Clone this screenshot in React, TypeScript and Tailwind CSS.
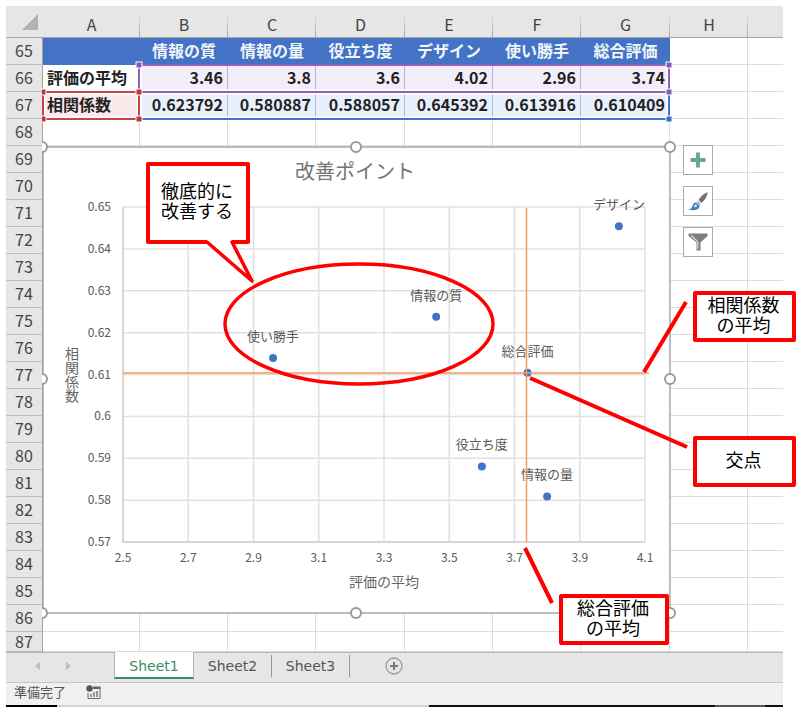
import clsx from "clsx"

const columns = ["A", "B", "C", "D", "E", "F", "G", "H", ""]
const items = ["情報の質", "情報の量", "役立ち度", "デザイン", "使い勝手", "総合評価"]
const scores = ["3.46", "3.8", "3.6", "4.02", "2.96", "3.74"]
const correlations = ["0.623792", "0.580887", "0.588057", "0.645392", "0.613916", "0.610409"]
const emptyRows = Array.from({ length: 20 }, (_, i) => 68 + i)

const points = [
    { name: "情報の質", x: 3.46, y: 0.623792 },
    { name: "情報の量", x: 3.8, y: 0.580887 },
    { name: "役立ち度", x: 3.6, y: 0.588057 },
    { name: "デザイン", x: 4.02, y: 0.645392 },
    { name: "使い勝手", x: 2.96, y: 0.613916 },
    { name: "総合評価", x: 3.74, y: 0.610409 },
]

const xTicks = [2.5, 2.7, 2.9, 3.1, 3.3, 3.5, 3.7, 3.9, 4.1]
const yTicks = [0.65, 0.64, 0.63, 0.62, 0.61, 0.6, 0.59, 0.58, 0.57]

const sx = (v: number) => 81 + ((v - 2.5) / 1.6) * 522
const sy = (v: number) => 67 + ((0.65 - v) / 0.08) * 335

const RowHeader = ({ n }: { n: number }) => (
    <th scope="row" className="border-r border-b border-r-[#a0a0a0] border-b-[#bdbdbd] bg-[#e6e6e6] p-0 pb-0.5 text-center leading-4 font-normal text-[#444]">
        {n}
    </th>
)

const cell = "border-r border-b border-[#dcdcdc] p-0"
const headCell = "bg-[#4472c4] p-0 pb-1 text-center font-bold text-[#f1f5fc]"
const labelCell = "p-0 pb-1 pl-1 text-left font-bold whitespace-nowrap text-[#222]"
const valueCell = "border-r border-[#a9b9e6] p-0 pr-1 pb-1 text-right font-bold text-[#222]"

const Cells = () => (
    <table className="w-full table-fixed border-separate border-spacing-0 text-base leading-5">
        <colgroup>
            <col className="w-[37px]" />
            <col className="w-[97px]" />
            <col className="w-[88px]" />
            <col className="w-[88px]" />
            <col className="w-[89px]" />
            <col className="w-[88px]" />
            <col className="w-[88px]" />
            <col className="w-[89px]" />
            <col className="w-[78px]" />
            <col />
        </colgroup>
        <thead>
            <tr className="h-8 bg-[#e6e6e6] text-[#444]">
                <td className="border-b border-[#a6a6a6] p-0">
                    <svg className="ml-4 h-4 w-4" viewBox="0 0 16 16" aria-hidden="true">
                        <path d="M16 0V16H0Z" fill="#b2b2b2" />
                    </svg>
                </td>
                {columns.map((c, i) => (
                    <th
                        key={i}
                        className={clsx(
                            "border-b border-[#a6a6a6] p-0 pt-1 font-normal",
                            c && "bg-[linear-gradient(to_bottom,#e6e6e6_20%,#a6a6a6)] bg-[length:1px_100%] bg-right bg-no-repeat",
                        )}
                    >
                        {c}
                    </th>
                ))}
            </tr>
        </thead>
        <tbody>
            <tr className="h-[27px]">
                <RowHeader n={65} />
                <td className="bg-[#4472c4] p-0"></td>
                {items.map((t) => (
                    <th key={t} scope="col" className={headCell}>{t}</th>
                ))}
                <td className={cell}></td>
                <td className="border-b border-[#dcdcdc] p-0"></td>
            </tr>
            <tr className="h-[27px]">
                <RowHeader n={66} />
                <th className={labelCell}>評価の平均</th>
                {scores.map((t, i) => (
                    <td key={i} className={clsx(valueCell, "bg-[#f2edf8]")}>{t}</td>
                ))}
                <td className={cell}></td>
                <td className="border-b border-[#dcdcdc] p-0"></td>
            </tr>
            <tr className="h-[27px]">
                <RowHeader n={67} />
                <th className={clsx(labelCell, "bg-[#fae9ea]")}>相関係数</th>
                {correlations.map((t, i) => (
                    <td key={i} className={clsx(valueCell, "bg-[#e9f0fb]")}>{t}</td>
                ))}
                <td className={cell}></td>
                <td className="border-b border-[#dcdcdc] p-0"></td>
            </tr>
            {emptyRows.map((n) => (
                <tr key={n} className={n === 87 ? "h-5" : "h-[27px]"}>
                    <RowHeader n={n} />
                    {columns.map((c, i) => (
                        <td key={i} className={c ? cell : "border-b border-[#dcdcdc] p-0"}></td>
                    ))}
                </tr>
            ))}
        </tbody>
    </table>
)

// coloured outlines of the ranges the chart reads from
const RangeOutlines = () => {
    const handles: [number, number, string][] = [
        [97, 7, "#8457b8"],
        [627, 7, "#8457b8"],
        [627, 34, "#8457b8"],
        [627, 61, "#2f6fc9"],
        [1, 34, "#c0343f"],
        [97, 34, "#c0343f"],
        [1, 61, "#c0343f"],
        [97, 61, "#c0343f"],
    ]
    return (
        <svg className="pointer-events-none absolute top-[52px] left-[36px] h-[66px] w-[632px]" viewBox="0 0 632 66" fill="none" aria-hidden="true">
            <path d="M97 34V7M627 7V34H97M1 34H97V61H1ZM97 61H627V34" stroke="#fff" strokeWidth="5" />
            <path d="M97 61H627V34" stroke="#3a74cb" strokeWidth="2" />
            <path d="M97 7H627V34H97Z" stroke="#8c62bd" strokeWidth="2" />
            <path d="M1 34H97V61H1Z" stroke="#c4434d" strokeWidth="2" />
            {handles.map(([x, y, c]) => (
                <rect key={`${x}-${y}`} x={x - 3} y={y - 3} width="6" height="6" fill={c} stroke="#fff" />
            ))}
        </svg>
    )
}

const Chart = () => (
    <svg
        className="absolute top-[134px] left-[36px] h-[480px] w-[636px]"
        viewBox="0 0 636 480"
        fontSize="12"
        fill="#595959"
        textAnchor="middle"
        role="img"
        aria-label="改善ポイント"
    >
        <rect x="1" y="7" width="627" height="466" fill="#fff" stroke="#a6a6a6" strokeWidth="1.5" />
        <text x="313" y="39" fontSize="20" fill="#757575">改善ポイント</text>
        <g stroke="#e0e0e0" strokeWidth="1.5">
            {xTicks.map((t) => <line key={t} x1={sx(t)} x2={sx(t)} y1="67" y2="402" />)}
            {yTicks.map((t) => <line key={t} x1="81" x2="603" y1={sy(t)} y2={sy(t)} />)}
        </g>
        <path d="M81 67V402H603" fill="none" stroke="#cfcfcf" strokeWidth="1.5" />
        {xTicks.map((t) => <text key={t} x={sx(t)} y="422">{t}</text>)}
        {yTicks.map((t) => <text key={t} x="69" y={sy(t) + 4} textAnchor="end">{t}</text>)}
        <text x="342" y="447" fontSize="14" fill="#666">評価の平均</text>
        <text x="30" y="235" fontSize="14" fill="#666" className="[writing-mode:vertical-rl]">相関係数</text>
        {points.map((p) => (
            <g key={p.name}>
                <circle cx={sx(p.x)} cy={sy(p.y)} r="4" fill="#4472c4" />
                <text x={sx(p.x)} y={sy(p.y) - 17} fontSize="13">{p.name}</text>
            </g>
        ))}
        <path d="M81 233H607M484.500 68V402" fill="none" stroke="#f49b5c" strokeWidth="1.5" />
        <g fill="#fff" stroke="#9b9b9b" strokeWidth="2">
            {[7, 239, 473].map((y) => <circle key={y} cx="0" cy={y} r="5" />)}
            {[7, 239, 473].map((y) => <circle key={y} cx="628" cy={y} r="5" />)}
            <circle cx="314" cy="7" r="5" />
            <circle cx="314" cy="473" r="5" />
        </g>
    </svg>
)

const toolButton = "flex h-[30px] w-[30px] items-center justify-center border border-[#ababab] bg-white"

const ChartTools = () => (
    <div className="absolute top-[139px] left-[677px] flex flex-col gap-[11px]">
        <button className={toolButton} aria-label="グラフ要素">
            <svg className="h-4 w-4" viewBox="0 0 16 16" aria-hidden="true">
                <path d="M6 0.5H10V6H15.5V10H10V15.5H6V10H0.5V6H6Z" fill="#68a890" />
            </svg>
        </button>
        <button className={toolButton} aria-label="グラフ スタイル">
            <svg className="h-5 w-5" viewBox="0 0 20 20" aria-hidden="true">
                <path d="M19.500 1C16 2.500 12.500 5.500 10.500 9L13.500 12C17 9 19.500 5 19.500 1Z" fill="#737373" />
                <path d="M9.600 10L12.600 13L11.500 14L8.700 11Z" fill="#999" />
                <path d="M8 11.500C5.500 11.500 4.800 13.500 4.300 15.500C3.700 17.300 2 18.300 0.500 18.800C4 19.500 11.500 20 11.500 14.800Z" fill="#3f7fba" />
                <path d="M7.500 13C6.500 13.500 6.300 15 6 16.300C7.500 16.500 8.800 15.800 9.300 14.700Z" fill="#d4e5f3" />
            </svg>
        </button>
        <button className={toolButton} aria-label="グラフ フィルター">
            <svg className="h-5 w-5" viewBox="0 0 20 20" aria-hidden="true">
                <path d="M0.500 1.500H19.500V4L12.500 10.500V18.500H8.500V10.500L0.500 4Z" fill="#7c7c7c" />
                <path d="M3 3.300L9.800 9.800V17" fill="none" stroke="#d9d9d9" strokeWidth="1.200" />
            </svg>
        </button>
    </div>
)

const callout = "absolute flex items-center justify-center rounded-xs border-4 border-[#ff0000] bg-white pr-0.5 pb-1.5 text-center text-lg leading-5 text-black"

const Annotations = () => (
    <div className="pointer-events-none absolute top-0 left-0">
        <div className={clsx(callout, "top-[156px] left-[140px] h-[82px] w-[104px]")}>徹底的に<br />改善する</div>
        <div className={clsx(callout, "top-[285px] left-[687px] h-[51px] w-[103px]")}>相関係数<br />の平均</div>
        <div className={clsx(callout, "top-[430px] left-[687px] h-[51px] w-[103px]")}>交点</div>
        <div className={clsx(callout, "top-[588px] left-[553px] h-[51px] w-[110px]")}>総合評価<br />の平均</div>
        <svg className="absolute top-0 left-0 h-[646px] w-[777px]" viewBox="0 0 777 646" fill="none" stroke="#ff0000" strokeWidth="4" aria-hidden="true">
            <path d="M201 233V239L246 275L226 239V233Z" fill="#fff" stroke="none" />
            <path d="M196 236H201L246 275L226 236H231" strokeWidth="3.500" strokeLinejoin="round" />
            <ellipse cx="353" cy="318" rx="134" ry="60" strokeWidth="3.500" />
            <path d="M638 366L680 296M524 372L681 441M519 542L546 597" />
        </svg>
    </div>
)

const SheetTabs = () => (
    <nav className="flex h-[31px] items-start border-b border-[#c6c6c6] bg-[#e6e6e6] font-['DejaVu_Sans',sans-serif] text-sm leading-5 text-[#555]">
        <div className="flex h-full w-[108px] items-center gap-[24px] border-t border-[#b4b4b4] pb-1 pl-[29px]">
            <button aria-label="前のシート">
                <svg className="h-2 w-1.5" viewBox="0 0 6 8" aria-hidden="true"><path d="M5 0V8L0 4Z" fill="#bcbcbc" /></svg>
            </button>
            <button aria-label="次のシート">
                <svg className="h-2 w-1.5" viewBox="0 0 6 8" aria-hidden="true"><path d="M1 0V8L6 4Z" fill="#bcbcbc" /></svg>
            </button>
        </div>
        <button className="h-[27px] w-[80px] border-x border-b-2 border-x-[#b4b4b4] border-b-[#3f8a63] bg-white pt-0.5 text-[#3b8c65]">Sheet1</button>
        <div className="flex h-full flex-1 items-center border-t border-[#b4b4b4] pb-1">
            <button className="h-[22px] w-[78px] border-r border-[#999]">Sheet2</button>
            <button className="h-[22px] w-[78px] border-r border-[#999]">Sheet3</button>
            <button className="ml-[35px]" aria-label="新しいシート">
                <svg className="h-[18px] w-[18px]" viewBox="0 0 18 18" fill="none" aria-hidden="true">
                    <circle cx="9" cy="9" r="8" stroke="#9a9a9a" strokeWidth="1.300" />
                    <path d="M9 5V13M5 9H13" stroke="#777" strokeWidth="2" />
                </svg>
            </button>
        </div>
    </nav>
)

const StatusBar = () => (
    <footer>
        <div className="flex h-[22px] items-center gap-5 bg-[#f0f0f0] pb-1 pl-2 text-[13px] leading-5 text-[#555]">
            <span>準備完了</span>
            <svg className="h-[15px] w-[15px]" viewBox="0 0 15 15" fill="none" aria-hidden="true">
                <path d="M7 2.500H14V13.500H2V8" stroke="#666" />
                <path d="M7 1.500H14.500V4H7Z" fill="#666" />
                <circle cx="3.500" cy="3.500" r="3.200" fill="#555" />
                <path d="M5 12V9M8 12V7M11 12V6" stroke="#777" strokeWidth="1.500" />
            </svg>
        </div>
        <div className="flex h-0.5">
            <div className="w-[51px] bg-black"></div>
            <div className="w-[372px] bg-[#d2d2d2]"></div>
            <div className="flex-1 bg-[#111]"></div>
            <div className="w-[50px] bg-[#555]"></div>
            <div className="w-[18px] bg-[#111]"></div>
        </div>
    </footer>
)

const App = () => {
    return (
        <div className="bg-white pt-1.5 pr-[17px] pl-1.5 font-['Noto_Sans_CJK_JP',sans-serif]">
            <main className="relative">
                <Cells />
                <RangeOutlines />
                <Chart />
                <ChartTools />
                <Annotations />
            </main>
            <SheetTabs />
            <StatusBar />
        </div>
    )
}

export default App
